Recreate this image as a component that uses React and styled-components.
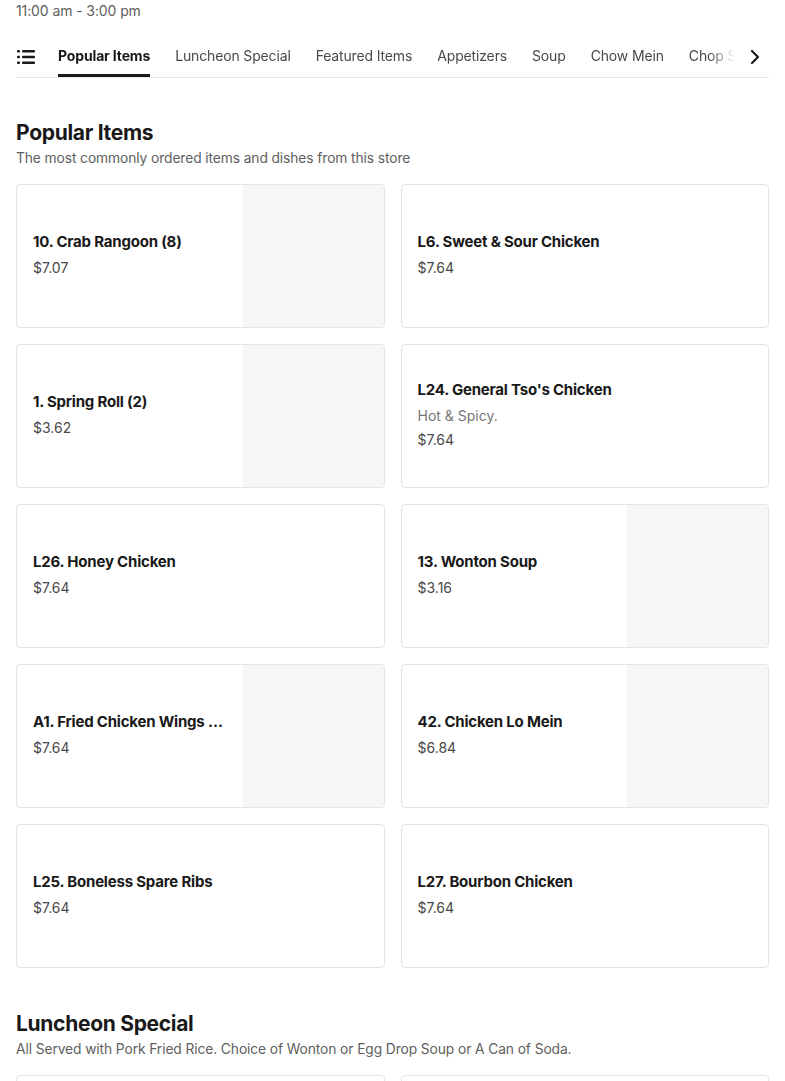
import React from 'react';
import styled, { createGlobalStyle } from 'styled-components';

const GlobalStyle = createGlobalStyle`
  body {
    margin: 0;
    background: #fff;
    font-family: Inter, "Open Sans", sans-serif;
    color: #191919;
  }
`;

const Page = styled.div`
  padding: 0 16px;
`;

const Hours = styled.div`
  font-size: 14px;
  line-height: 22px;
  color: #606060;
  letter-spacing: -0.1px;
`;

const TabBar = styled.div`
  display: flex;
  align-items: stretch;
  height: 40px;
  margin-top: 15px;
  border-bottom: 1px solid #e7e7e7;
`;

const MenuIcon = styled.div`
  display: flex;
  align-items: center;
  padding-bottom: 1px;
  width: 42px;
  flex-shrink: 0;
`;

const Tabs = styled.div`
  display: flex;
  gap: 25px;
  overflow: hidden;
  flex: 1;
  white-space: nowrap;
  mask-image: linear-gradient(to right, #000 calc(100% - 40px), transparent calc(100% - 14px));
`;

const Tab = styled.div`
  display: flex;
  align-items: center;
  padding-bottom: 1px;
  font-size: 14px;
  letter-spacing: -0.15px;
  font-weight: ${(p) => (p.$active ? 700 : 400)};
  color: ${(p) => (p.$active ? '#191919' : '#494949')};
  border-bottom: 4px solid ${(p) => (p.$active ? '#191919' : 'transparent')};
  border-radius: 3px 3px 0 0;
  margin-bottom: -1px;
`;

const Chevron = styled.div`
  display: flex;
  align-items: center;
  padding: 0 8px 1px 0;
`;

const Section = styled.section`
  margin-top: 41px;
  & + & {
    margin-top: 42px;
  }
`;

const Title = styled.h2`
  margin: 0;
  font-size: 21px;
  line-height: 28px;
  font-weight: 700;
  letter-spacing: -0.3px;
`;

const Subtitle = styled.p`
  margin: 1px 0 16px;
  font-size: 13.8px;
  line-height: 20px;
  color: #606060;
  letter-spacing: -0.1px;
`;

const Grid = styled.div`
  display: grid;
  grid-template-columns: 1fr 1fr;
  gap: 16px;
`;

const Card = styled.div`
  display: flex;
  height: 144px;
  box-sizing: border-box;
  border: 1px solid #e4e4e4;
  border-radius: 4px;
  overflow: hidden;
`;

const Info = styled.div`
  flex: 1;
  min-width: 0;
  display: flex;
  flex-direction: column;
  justify-content: center;
  padding: 0 16px 3px;
`;

const Name = styled.div`
  font-size: 15px;
  line-height: 22px;
  font-weight: 700;
  overflow: hidden;
  text-overflow: ellipsis;
  white-space: nowrap;
  letter-spacing: -0.2px;
`;

const Desc = styled.div`
  font-size: 14px;
  line-height: 20px;
  color: #767676;
  margin-top: 5px;
`;

const Price = styled.div`
  font-size: 14px;
  line-height: 20px;
  color: #494949;
  margin-top: ${(p) => (p.$afterDesc ? '4px' : '5px')};
`;

const Photo = styled.div`
  width: 142px;
  flex-shrink: 0;
  background: #f6f6f6;
`;

const tabs = ['Popular Items', 'Luncheon Special', 'Featured Items', 'Appetizers', 'Soup', 'Chow Mein', 'Chop Suey'];

const popular = [
  { name: '10. Crab Rangoon (8)', price: '$7.07', photo: true },
  { name: 'L6. Sweet & Sour Chicken', price: '$7.64' },
  { name: '1. Spring Roll (2)', price: '$3.62', photo: true },
  { name: "L24. General Tso's Chicken", desc: 'Hot & Spicy.', price: '$7.64' },
  { name: 'L26. Honey Chicken', price: '$7.64' },
  { name: '13. Wonton Soup', price: '$3.16', photo: true },
  { name: 'A1. Fried Chicken Wings (4)', price: '$7.64', photo: true },
  { name: '42. Chicken Lo Mein', price: '$6.84', photo: true },
  { name: 'L25. Boneless Spare Ribs', price: '$7.64' },
  { name: 'L27. Bourbon Chicken', price: '$7.64' },
];

const lunch = [
  { name: 'L1. Chicken Chow Mein', price: '$7.64' },
  { name: 'L2. Shrimp Chow Mein', price: '$7.64' },
];

const ItemCard = ({ item }) => (
  <Card>
    <Info>
      <Name>{item.name}</Name>
      {item.desc && <Desc>{item.desc}</Desc>}
      <Price $afterDesc={!!item.desc}>{item.price}</Price>
    </Info>
    {item.photo && <Photo />}
  </Card>
);

export default function App() {
  return (
    <Page>
      <GlobalStyle />
      <Hours>11:00 am - 3:00 pm</Hours>
      <TabBar>
        <MenuIcon>
          <svg width="20" height="16" viewBox="0 0 20 16" fill="#191919">
            <rect x="1" y="1" width="3" height="2.4" rx="1" />
            <rect x="1" y="6.8" width="3" height="2.4" rx="1" />
            <rect x="1" y="12.6" width="3" height="2.4" rx="1" />
            <rect x="6" y="1" width="13" height="2.4" rx="1" />
            <rect x="6" y="6.8" width="13" height="2.4" rx="1" />
            <rect x="6" y="12.6" width="13" height="2.4" rx="1" />
          </svg>
        </MenuIcon>
        <Tabs>
          {tabs.map((t, i) => (
            <Tab key={t} $active={i === 0}>{t}</Tab>
          ))}
        </Tabs>
        <Chevron>
          <svg width="12" height="16" viewBox="0 0 12 16" fill="none" stroke="#191919" strokeWidth="2.2" strokeLinecap="round" strokeLinejoin="round">
            <path d="M3 2l6 6-6 6" />
          </svg>
        </Chevron>
      </TabBar>
      <Section>
        <Title>Popular Items</Title>
        <Subtitle>The most commonly ordered items and dishes from this store</Subtitle>
        <Grid>
          {popular.map((it) => (
            <ItemCard key={it.name} item={it} />
          ))}
        </Grid>
      </Section>
      <Section>
        <Title>Luncheon Special</Title>
        <Subtitle>All Served with Pork Fried Rice. Choice of Wonton or Egg Drop Soup or A Can of Soda.</Subtitle>
        <Grid>
          {lunch.map((it) => (
            <ItemCard key={it.name} item={it} />
          ))}
        </Grid>
      </Section>
    </Page>
  );
}
